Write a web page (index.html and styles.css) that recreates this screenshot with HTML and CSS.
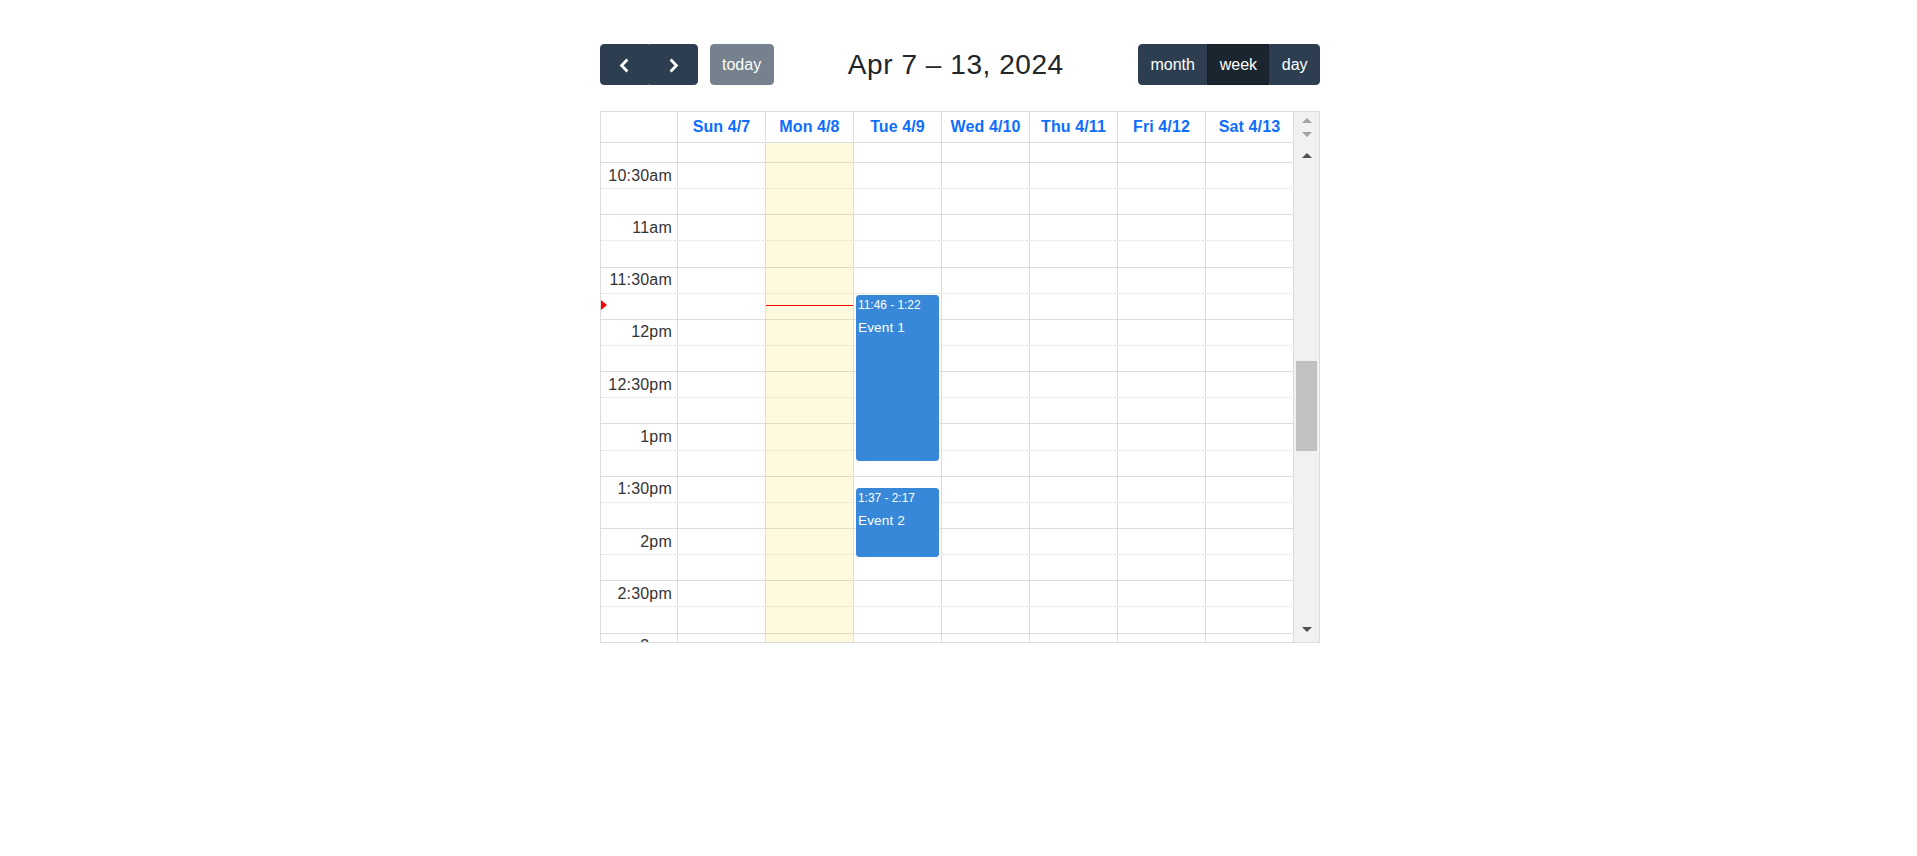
FILE: index.html
```html
<!DOCTYPE html>
<html lang="en">
<head>
<meta charset="utf-8">
<title>Calendar</title>
<link rel="stylesheet" href="styles.css">
</head>
<body>
<div class="calendar">
  <div class="toolbar">
    <div class="chunk">
      <div class="btn-group">
        <button class="btn btn-icon" aria-label="prev"><svg width="11" height="15" viewBox="0 0 11 15"><path d="M8.4 1.5 L2.6 7.5 L8.4 13.5" fill="none" stroke="#fff" stroke-width="2.8"/></svg></button>
        <button class="btn btn-icon" aria-label="next"><svg width="11" height="15" viewBox="0 0 11 15"><path d="M2.6 1.5 L8.4 7.5 L2.6 13.5" fill="none" stroke="#fff" stroke-width="2.8"/></svg></button>
      </div>
      <button class="btn btn-today">today</button>
    </div>
    <h2 class="title">Apr 7 – 13, 2024</h2>
    <div class="btn-group">
      <button class="btn">month</button>
      <button class="btn active">week</button>
      <button class="btn">day</button>
    </div>
  </div>
  <div class="view">
    <div class="head">
      <div class="hcell"></div>
      <div class="hcell">Sun 4/7</div>
      <div class="hcell">Mon 4/8</div>
      <div class="hcell">Tue 4/9</div>
      <div class="hcell">Wed 4/10</div>
      <div class="hcell">Thu 4/11</div>
      <div class="hcell">Fri 4/12</div>
      <div class="hcell">Sat 4/13</div>
      <div class="head-gutter"><span class="arr up light"></span><span class="arr down light"></span></div>
    </div>
    <div class="body">
      <div class="scroller">
        <div class="slots">
          <div class="slot partial"></div>
          <div class="slot lab"><span class="label">10:30am</span></div>
          <div class="slot"></div>
          <div class="slot lab"><span class="label">11am</span></div>
          <div class="slot"></div>
          <div class="slot lab"><span class="label">11:30am</span></div>
          <div class="slot"></div>
          <div class="slot lab"><span class="label">12pm</span></div>
          <div class="slot"></div>
          <div class="slot lab"><span class="label">12:30pm</span></div>
          <div class="slot"></div>
          <div class="slot lab"><span class="label">1pm</span></div>
          <div class="slot"></div>
          <div class="slot lab"><span class="label">1:30pm</span></div>
          <div class="slot"></div>
          <div class="slot lab"><span class="label">2pm</span></div>
          <div class="slot"></div>
          <div class="slot lab"><span class="label">2:30pm</span></div>
          <div class="slot"></div>
          <div class="slot lab"><span class="label">3pm</span></div>
          <div class="slot"></div>
        </div>
        <div class="cols">
          <div class="col"><span class="now-arrow"></span></div>
          <div class="col"></div>
          <div class="col today"><div class="now-line"></div></div>
          <div class="col">
            <div class="events">
              <div class="event ev1"><div class="ev-time">11:46 - 1:22</div><div class="ev-title">Event 1</div></div>
              <div class="event ev2"><div class="ev-time">1:37 - 2:17</div><div class="ev-title">Event 2</div></div>
            </div>
          </div>
          <div class="col"></div>
          <div class="col"></div>
          <div class="col"></div>
          <div class="col"></div>
        </div>
      </div>
      <div class="body-gutter">
        <div class="sb-btn"><span class="arr up dark"></span></div>
        <div class="sb-track"><div class="thumb"></div></div>
        <div class="sb-btn"><span class="arr down dark"></span></div>
      </div>
    </div>
  </div>
</div>
</body>
</html>
```
FILE: styles.css
```css
* { box-sizing: border-box; }
html, body { margin: 0; }
body {
  font-family: "Liberation Sans", Arial, sans-serif;
  font-size: 16px;
  color: #212529;
  background: #fff;
  padding-left: 3px;
}
.calendar { width: 720px; margin: 44px auto 0; }

.toolbar {
  display: flex;
  justify-content: space-between;
  align-items: center;
  margin-bottom: 26px;
}
.chunk { display: flex; align-items: center; }
.btn-group { display: flex; }
.btn {
  font-family: inherit;
  font-size: 16px;
  line-height: 24px;
  padding: 7.5px 11.4px;
  border: 1px solid #2c3e50;
  background: #2c3e50;
  color: #fff;
  border-radius: 4px;
  margin: 0;
}
.btn-group .btn { border-radius: 0; }
.btn-group .btn:first-child { border-radius: 4px 0 0 4px; }
.btn-group .btn:last-child { border-radius: 0 4px 4px 0; }
.btn.active { background: #1a252f; border-color: #151e27; }
.btn-today { margin-left: 12px; opacity: .65; }
.btn-icon {
  display: flex;
  align-items: center;
  justify-content: center;
  width: 48.8px;
  height: 41px;
  padding: 0;
}
.btn-icon svg { display: block; margin-top: 2px; }
.title {
  font-size: 28px;
  font-weight: 400;
  margin: 0;
  line-height: 1.2;
  color: #212529;
  letter-spacing: 0.55px;
}

.view { border: 1px solid #ddd; }
.head {
  display: grid;
  grid-template-columns: 77px repeat(7, 88px) 25px;
  height: 31px;
}
.hcell {
  border-right: 1px solid #ddd;
  border-bottom: 1px solid #ddd;
  text-align: center;
  font-weight: bold;
  color: #0d6efd;
  line-height: 30px;
  white-space: nowrap;
  letter-spacing: 0.1px;
}
.head-gutter {
  background: #f1f1f1;
  display: flex;
  flex-direction: column;
  align-items: center;
}
.arr {
  display: block;
  width: 0;
  height: 0;
  border-left: 5.5px solid transparent;
  border-right: 5.5px solid transparent;
}
.arr.up { border-bottom: 5px solid currentColor; }
.arr.down { border-top: 5px solid currentColor; }
.arr.light { color: #a3a3a3; }
.arr.dark { color: #505050; }
.head-gutter .up { margin-top: 6px; }
.head-gutter .down { margin-top: 9px; }

.body { display: flex; height: 499px; }
.scroller { width: 693px; position: relative; overflow: hidden; }
.slot {
  height: 26.15px;
  border-bottom: 1px solid #ddd;
  display: flex;
  align-items: center;
}
.slot.partial { height: 20px; }
.slot.lab { border-bottom-style: dotted; }
.label {
  width: 76px;
  text-align: right;
  padding-right: 5px;
  color: #333;
  line-height: 24px;
  white-space: nowrap;
  letter-spacing: 0.2px;
}

.cols {
  position: absolute;
  inset: 0;
  display: grid;
  grid-template-columns: 77px repeat(7, 88px);
}
.col { border-right: 1px solid #ddd; position: relative; }
.col.today { background: rgba(255, 220, 40, .15); }
.now-line {
  position: absolute;
  left: 0;
  right: 0;
  top: 162px;
  border-top: 1px solid red;
}
.now-arrow {
  position: absolute;
  left: 0;
  top: 157px;
  width: 0;
  height: 0;
  border-style: solid;
  border-color: transparent transparent transparent red;
  border-width: 5px 0 5px 6px;
}
.events { position: absolute; top: 0; bottom: 0; left: 2px; right: 2.5%; }
.event {
  position: absolute;
  left: 0;
  right: 0;
  background: #3788d8;
  border: 1px solid #3788d8;
  border-radius: 3px;
  color: #fff;
  padding: 1px 1px 0;
  overflow: hidden;
}
.ev1 { top: 152px; height: 166px; }
.ev2 { top: 345.3px; height: 68.4px; }
.ev-time { font-size: 11.9px; line-height: 1.5; margin-bottom: 3px; white-space: nowrap; }
.ev-title { font-size: 13.6px; line-height: 1.5; letter-spacing: 0.1px; }

.body-gutter {
  width: 25px;
  background: #f1f1f1;
  display: flex;
  flex-direction: column;
}
.sb-btn { height: 25px; display: flex; align-items: center; justify-content: center; }
.sb-track { flex: 1; }
.thumb { margin: 193px 2px 0; height: 90px; background: #c1c1c1; }
```
